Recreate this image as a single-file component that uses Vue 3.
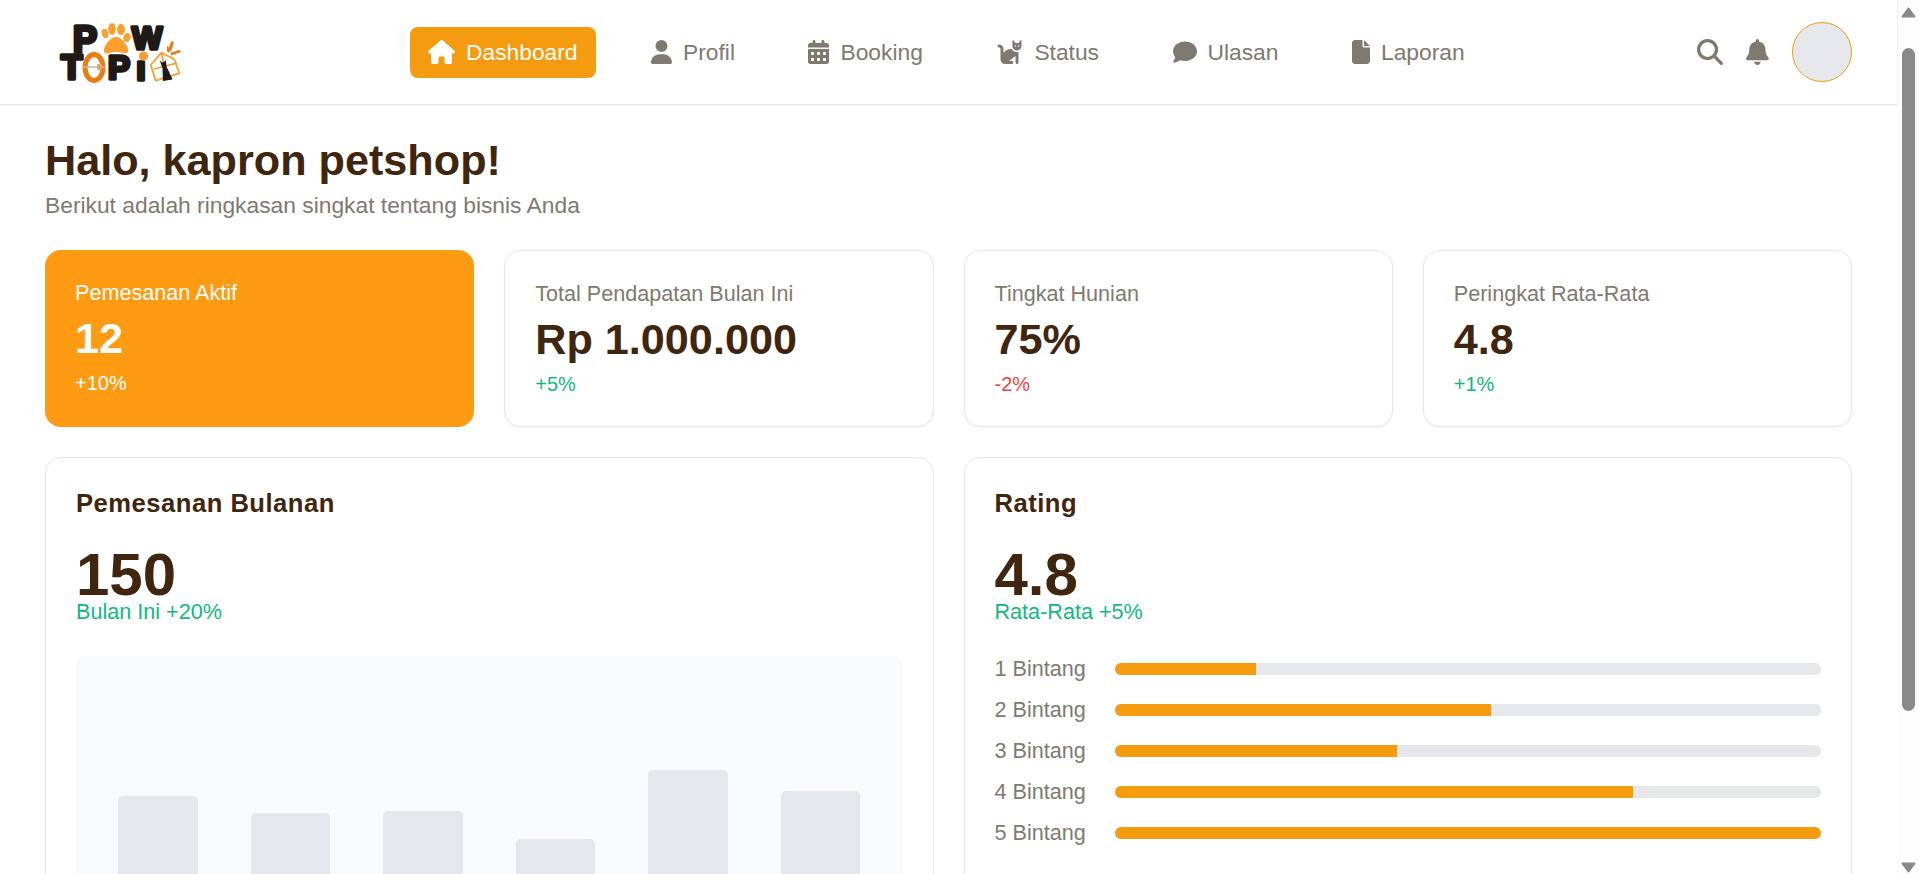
<script setup>
const navItems = [
  { label: 'Dashboard', vb: '0 0 576 512', d: 'M575.8 255.5c0 18-15 32.1-32 32.1h-32l.7 160.2c0 2.7-.2 5.4-.5 8.1V472c0 22.1-17.9 40-40 40H456c-1.1 0-2.2 0-3.3-.1c-1.4 .1-2.8 .1-4.2 .1H416 392c-22.1 0-40-17.9-40-40V448 384c0-17.7-14.3-32-32-32H256c-17.7 0-32 14.3-32 32v64 24c0 22.1-17.9 40-40 40H160 128.1c-1.5 0-3-.1-4.5-.2c-1.2 .1-2.4 .2-3.6 .2H104c-22.1 0-40-17.9-40-40V360c0-.9 0-1.9 .1-2.8V287.6H32c-18 0-32-14-32-32.1c0-9 3-17 10-24L266.4 8c7-7 15-8 22-8s15 2 21 7L564.8 231.5c8 7 12 15 11 24z', active: true },
  { label: 'Profil', vb: '0 0 448 512', d: 'M224 256A128 128 0 1 0 224 0a128 128 0 1 0 0 256zm-45.7 48C79.8 304 0 383.8 0 482.3C0 498.7 13.3 512 29.7 512H418.3c16.4 0 29.7-13.3 29.7-29.7C448 383.8 368.2 304 269.7 304H178.3z' },
  { label: 'Booking', vb: '0 0 448 512', d: 'M128 0c17.7 0 32 14.3 32 32V64H288V32c0-17.7 14.3-32 32-32s32 14.3 32 32V64h48c26.5 0 48 21.5 48 48v48H0V112C0 85.5 21.5 64 48 64H96V32c0-17.7 14.3-32 32-32zM0 192H448V464c0 26.5-21.5 48-48 48H48c-26.5 0-48-21.5-48-48V192zm64 80v32c0 8.8 7.2 16 16 16h32c8.8 0 16-7.2 16-16V272c0-8.8-7.2-16-16-16H80c-8.8 0-16 7.2-16 16zm128 0v32c0 8.8 7.2 16 16 16h32c8.8 0 16-7.2 16-16V272c0-8.8-7.2-16-16-16H208c-8.8 0-16 7.2-16 16zm144-16c-8.8 0-16 7.2-16 16v32c0 8.8 7.2 16 16 16h32c8.8 0 16-7.2 16-16V272c0-8.8-7.2-16-16-16H336zM64 400v32c0 8.8 7.2 16 16 16h32c8.8 0 16-7.2 16-16V400c0-8.8-7.2-16-16-16H80c-8.8 0-16 7.2-16 16zm144-16c-8.8 0-16 7.2-16 16v32c0 8.8 7.2 16 16 16h32c8.8 0 16-7.2 16-16V400c0-8.8-7.2-16-16-16H208zm112 16v32c0 8.8 7.2 16 16 16h32c8.8 0 16-7.2 16-16V400c0-8.8-7.2-16-16-16H336c-8.8 0-16 7.2-16 16z' },
  { label: 'Status', vb: '0 0 576 512', d: 'M320 192h17.1c22.1 38.3 63.5 64 110.9 64c11 0 21.8-1.4 32-4v4 32V480c0 17.7-14.3 32-32 32s-32-14.3-32-32V339.2L280 448h56c17.7 0 32 14.3 32 32s-14.3 32-32 32H192c-53 0-96-43-96-96V192.5c0-16.1-12-29.8-28-31.8l-7.9-1c-17.5-2.2-30-18.2-27.8-35.7s18.2-30 35.7-27.8l7.9 1c48 6 84.1 46.8 84.1 95.3v85.3c34.4-51.7 93.2-85.8 160-85.8zm160 26.5v0c-10 3.5-20.8 5.5-32 5.5c-28.4 0-54-12.4-71.6-32h0c-3.7-4.1-7-8.5-9.9-13.2C357.3 164 352 146.6 352 128v0V32 12 10.7C352 4.8 356.7 .1 362.6 0h.2c3.3 0 6.4 1.6 8.4 4.2l0 .1L384 21.3l27.2 36.3L416 64h64l4.8-6.4L512 21.3 524.8 4.3l0-.1c2-2.6 5.1-4.2 8.4-4.2h.2C539.3 .1 544 4.8 544 10.7V12 32v96c0 17.3-4.6 33.6-12.6 47.6c-11.3 19.8-29.6 35.2-51.4 42.9zM432 128a16 16 0 1 0 -32 0 16 16 0 1 0 32 0zm48 16a16 16 0 1 0 0-32 16 16 0 1 0 0 32z' },
  { label: 'Ulasan', vb: '0 0 512 512', d: 'M512 240c0 114.9-114.6 208-256 208c-37.1 0-72.3-6.4-104.1-17.9c-11.9 8.7-31.3 20.6-54.3 30.6C73.6 471.1 44.7 480 16 480c-6.5 0-12.3-3.9-14.8-9.9c-2.5-6-1.1-12.8 3.4-17.4l0 0 0 0 0 0 0 0 .3-.3c.3-.3 .7-.7 1.3-1.4c1.1-1.2 2.8-3.1 4.9-5.7c4.1-5 9.6-12.4 15.2-21.6c10-16.6 19.5-38.4 21.4-62.9C17.7 326.8 0 285.1 0 240C0 125.1 114.6 32 256 32s256 93.1 256 208z' },
  { label: 'Laporan', vb: '0 0 384 512', d: 'M0 64C0 28.7 28.7 0 64 0H224V128c0 17.7 14.3 32 32 32H384V448c0 35.3-28.7 64-64 64H64c-35.3 0-64-28.7-64-64V64zm384 64H256V0L384 128z' },
]
const search = 'M416 208c0 45.9-14.9 88.3-40 122.7L502.6 457.4c12.5 12.5 12.5 32.8 0 45.3s-32.8 12.5-45.3 0L330.7 376c-34.4 25.2-76.8 40-122.7 40C93.1 416 0 322.9 0 208S93.1 0 208 0S416 93.1 416 208zM208 352a144 144 0 1 0 0-288 144 144 0 1 0 0 288z'
const bell = 'M224 0c-17.7 0-32 14.3-32 32V51.2C119 66 64 130.6 64 208v18.8c0 47-17.3 92.4-48.5 127.6l-7.4 8.3c-8.4 9.4-10.4 22.9-5.3 34.4S19.4 416 32 416H416c12.6 0 24-7.4 29.2-18.9s3.1-25-5.3-34.4l-7.4-8.3C401.3 319.2 384 273.9 384 226.8V208c0-77.4-55-142-128-156.8V32c0-17.7-14.3-32-32-32zm45.3 493.3c12-12 18.7-28.3 18.7-45.3H224 160c0 17 6.7 33.3 18.7 45.3s28.3 18.7 45.3 18.7s33.3-6.7 45.3-18.7z'
const stats = [
  { label: 'Pemesanan Aktif', value: '12', change: '+10%', tone: 'up', active: true },
  { label: 'Total Pendapatan Bulan Ini', value: 'Rp 1.000.000', change: '+5%', tone: 'up' },
  { label: 'Tingkat Hunian', value: '75%', change: '-2%', tone: 'down' },
  { label: 'Peringkat Rata-Rata', value: '4.8', change: '+1%', tone: 'up' },
]
const bars = [160, 143, 145, 117, 186, 165]
const ratings = [
  { label: '1 Bintang', pct: 20 },
  { label: '2 Bintang', pct: 53.3 },
  { label: '3 Bintang', pct: 40 },
  { label: '4 Bintang', pct: 73.4 },
  { label: '5 Bintang', pct: 100 },
]
</script>

<template>
  <div class="shell">
    <div class="page">
      <header class="topbar">
        <svg class="logo" viewBox="0 0 140 80" aria-label="Paw Topia">
          <text x="23" y="39.5" class="ll size-p">P</text>
          <text x="82" y="36.5" class="ll size-w">W</text>
          <text x="11" y="66.5" class="ll size-t">T</text>
          <text x="58" y="66.5" class="ll size-s">P</text>
          <text x="91" y="68" text-anchor="middle" class="ll size-i">ı</text>
          <circle cx="93.5" cy="44" r="4.6" fill="#fb9f2e" />
          <g fill="#fb9f2e">
            <ellipse cx="55" cy="21.5" rx="3.2" ry="4.8" transform="rotate(-15 55 21.5)" />
            <ellipse cx="62" cy="17" rx="3.8" ry="6" />
            <ellipse cx="71" cy="17.5" rx="3.8" ry="5.8" />
            <ellipse cx="77" cy="25.5" rx="3.6" ry="4.6" transform="rotate(20 77 25.5)" />
            <path d="M66 25c6 0 11 8 12 12c1 4-2 5-5 4c-2-.8-5-1-7-1s-5 .2-7 1c-3 1-6 0-5-4c1-4 6-12 12-12z" />
          </g>
          <ellipse cx="44" cy="55.5" rx="9" ry="13" fill="none" stroke="#ee7a12" stroke-width="5" />
          <path d="M32 55h24" stroke="#c9b8a6" stroke-width="1.5" />
          <rect x="47" y="52" width="5" height="6" rx="1" fill="#e3a56e" />
          <g fill="none" stroke="#fb9f2e" stroke-width="1.8" stroke-linejoin="round">
            <path d="M111.6 40.7L100.7 53L105.7 68.7L129.3 61.3L124.3 47.3z" />
            <path d="M104.3 57L126.7 51M111.6 40.7L116 66.3" />
          </g>
          <path d="M109.5 48l2.4 2.6l2.2-.6l1.6-2l1 7l4.4 9.2l1.4 3.2l-9.6 1.6l-.4-13z" fill="#1f1a17" />
          <g stroke="#ee7a12" stroke-linecap="round" fill="none">
            <path d="M122.3 30.7L119.8 38" stroke-width="3" />
            <path d="M129.3 39.3L122 41.8" stroke-width="2.6" />
            <path d="M117.7 35.3L118.3 39.7" stroke-width="2" />
          </g>
        </svg>
        <nav class="nav">
          <a v-for="item in navItems" :key="item.label" class="nav-item" :class="{ active: item.active }">
            <svg class="nav-icon" :viewBox="item.vb"><path :d="item.d" fill="currentColor" /></svg>
            <span>{{ item.label }}</span>
          </a>
        </nav>
        <div class="tools">
          <svg class="tool" viewBox="0 0 512 512"><path :d="search" fill="currentColor" /></svg>
          <svg class="tool" viewBox="0 0 448 512"><path :d="bell" fill="currentColor" /></svg>
          <div class="avatar"></div>
        </div>
      </header>

      <main class="content">
        <h1 class="greet">Halo, kapron petshop!</h1>
        <p class="sub">Berikut adalah ringkasan singkat tentang bisnis Anda</p>

        <section class="stats">
          <article v-for="s in stats" :key="s.label" class="stat" :class="{ on: s.active }">
            <div class="stat-label">{{ s.label }}</div>
            <div class="stat-value">{{ s.value }}</div>
            <div class="stat-change" :class="s.tone">{{ s.change }}</div>
          </article>
        </section>

        <section class="panels">
          <article class="panel">
            <h2 class="panel-title">Pemesanan Bulanan</h2>
            <div class="big">150</div>
            <div class="trend">Bulan Ini +20%</div>
            <div class="chart">
              <div v-for="(h, i) in bars" :key="i" class="bar" :style="{ height: h + 'px' }"></div>
            </div>
          </article>
          <article class="panel">
            <h2 class="panel-title">Rating</h2>
            <div class="big">4.8</div>
            <div class="trend">Rata-Rata +5%</div>
            <div class="rates">
              <div v-for="r in ratings" :key="r.label" class="rate">
                <span class="rate-label">{{ r.label }}</span>
                <div class="track"><div class="fill" :style="{ width: r.pct + '%' }"></div></div>
              </div>
            </div>
          </article>
        </section>
      </main>
    </div>
    <aside class="rail">
      <svg class="arrow" viewBox="0 0 15 11"><path d="M7.5 1.5L13.5 9.5H1.5z" /></svg>
      <div class="thumb"></div>
      <svg class="arrow down" viewBox="0 0 15 11"><path d="M1.5 1.5H13.5L7.5 9.5z" /></svg>
    </aside>
  </div>
</template>

<style>
body { margin: 0; background: #fff; }
</style>

<style scoped>
.shell { display: flex; height: 100vh; overflow: hidden; font-family: "Liberation Sans", Arial, sans-serif; color: #40260f; background: #fff; }
.page { flex: 1; min-width: 0; }
.rail { width: 22px; flex: none; background: #fdfdfd; display: flex; flex-direction: column; align-items: center; padding: 7px 0 1px; box-sizing: border-box; }
.arrow { width: 15px; height: 11px; display: block; flex: none; }
.arrow path { fill: #8a8a8a; stroke: #8a8a8a; stroke-width: 2; stroke-linejoin: round; }
.thumb { width: 13px; height: 663px; margin-top: 30px; border-radius: 7px; background: #8a8a8a; flex: none; }
.arrow.down { margin-top: auto; }
.topbar { height: 104px; box-sizing: border-box; display: flex; align-items: center; padding: 0 45px 0 50px; background: #fff; box-shadow: 0 1px 2px rgba(0,0,0,.13); position: relative; }
.logo { width: 140px; height: 80px; flex: none; display: block; margin-right: 220px; }
.ll { font-family: "Liberation Sans", sans-serif; font-weight: 700; fill: #1f1a17; stroke: #1f1a17; stroke-width: 3.6px; stroke-linejoin: round; }
.size-p { font-size: 36px; }
.size-w { font-size: 32px; }
.size-t { font-size: 35px; }
.size-s { font-size: 33px; }
.size-i { font-size: 34px; }
.nav { display: flex; align-items: center; gap: 37.5px; }
.nav-item { display: flex; align-items: center; gap: 11px; height: 51px; padding: 0 18px; border-radius: 8px; font-size: 22.8px; color: #7f7a6f; }
.nav-item.active { background: #f59b10; color: #fff; }
.nav-icon { height: 24px; width: auto; display: block; }
.tools { display: flex; align-items: center; gap: 23px; margin-left: auto; }
.tool { height: 26px; width: auto; color: #7f7a6f; display: block; }
.avatar { width: 60px; height: 60px; box-sizing: border-box; border-radius: 50%; background: #e5e7eb; border: 1px solid #f59b10; }
.content { padding: 30px 45px 0; }
.greet { margin: 0; font-size: 43.2px; line-height: 52px; font-weight: 700; color: #40260f; }
.sub { margin: 6px 0 0; font-size: 22.8px; line-height: 26px; color: #7f7a6f; }
.stats { display: grid; grid-template-columns: repeat(4, 1fr); gap: 30px; margin-top: 32px; }
.stat { background: #fff; border: 1px solid #e5e7eb; border-radius: 16px; padding: 30px; box-shadow: 0 1px 2px rgba(0,0,0,.05); }
.stat.on { background: #ff9b12; border: 0; box-shadow: none; color: #fff; }
.stat-label { font-size: 21.6px; line-height: 26px; color: #7f7a6f; }
.stat-value { font-size: 43.2px; line-height: 52px; font-weight: 700; margin-top: 6px; }
.stat-change { font-size: 20px; line-height: 24px; margin-top: 7px; }
.stat.on .stat-label, .stat.on .stat-change { color: #fff; }
.up { color: #10b981; }
.down { color: #ef4444; }
.panels { display: grid; grid-template-columns: repeat(2, 1fr); gap: 30px; margin-top: 30px; }
.panel { background: #fff; border: 1px solid #e5e7eb; border-radius: 16px; padding: 30px; box-shadow: 0 1px 2px rgba(0,0,0,.05); }
.panel-title { margin: 0; font-size: 25.6px; line-height: 30px; font-weight: 700; letter-spacing: .5px; color: #40260f; }
.big { font-size: 60px; line-height: 48px; font-weight: 700; margin-top: 33px; }
.trend { font-size: 21.6px; line-height: 24px; color: #10b981; margin-top: 1px; }
.chart { height: 300px; margin-top: 32px; background: #f9fafb; border-radius: 8px; display: flex; align-items: flex-end; padding: 0 42px; gap: 53px; }
.bar { flex: 1; background: #e5e7eb; border-radius: 5px 5px 0 0; }
.rates { margin-top: 33px; display: flex; flex-direction: column; gap: 17px; }
.rate { display: flex; align-items: center; height: 24px; }
.rate-label { width: 120px; flex: none; font-size: 21.6px; color: #7f7a6f; white-space: nowrap; }
.track { flex: 1; height: 12px; border-radius: 6px; background: #e5e7eb; overflow: hidden; }
.fill { height: 100%; background: #f59b10; }
</style>
